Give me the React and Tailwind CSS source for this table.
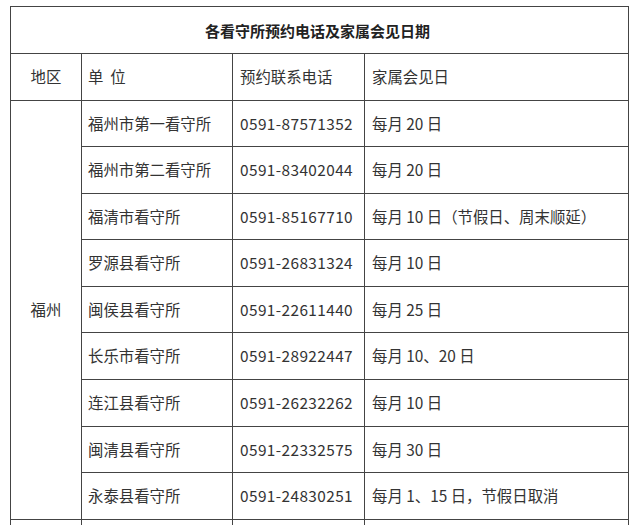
import React from "react";

const rows = [
  ["福州市第一看守所", "0591-87571352", "每月 20 日"],
  ["福州市第二看守所", "0591-83402044", "每月 20 日"],
  ["福清市看守所", "0591-85167710", "每月 10 日（节假日、周末顺延）"],
  ["罗源县看守所", "0591-26831324", "每月 10 日"],
  ["闽侯县看守所", "0591-22611440", "每月 25 日"],
  ["长乐市看守所", "0591-28922447", "每月 10、20 日"],
  ["连江县看守所", "0591-26232262", "每月 10 日"],
  ["闽清县看守所", "0591-22332575", "每月 30 日"],
  ["永泰县看守所", "0591-24830251", "每月 1、15 日，节假日取消"],
];

const cell = "border-r border-b border-[#444] flex items-center";

export default function App() {
  return (
    <div className="w-[640px] h-[525px] bg-white overflow-hidden pt-[6px] pl-[10px]" style={{ fontFamily: '"Noto Sans CJK SC", "Noto Sans", sans-serif' }}>
      <div className="grid w-[619px] border-l border-t border-[#444] grid-cols-[71px_151px_132px_264px] grid-rows-[47px_47px_46px_47px_46px_47px_46px_47px_47px_46px_47px_47px] text-[15.4px] text-[#333]">
        <div className={`${cell} col-span-4 justify-center pt-[3px] pr-[4px] font-bold text-[15px] text-[#222]`}>各看守所预约电话及家属会见日期</div>
        <div className={`${cell} justify-center`}>地区</div>
        <div className={`${cell} pl-[6px]`}>单&nbsp;&nbsp;位</div>
        <div className={`${cell} pl-[7px]`}>预约联系电话</div>
        <div className={`${cell} pl-[7px]`}>家属会见日</div>
        <div className={`${cell} row-span-9 justify-center`}>福州</div>
        {rows.map((r, i) => (
          <React.Fragment key={i}>
            <div className={`${cell} pl-[6px]`}>{r[0]}</div>
            <div className={`${cell} pl-[7px] tracking-[0.4px]`}>{r[1]}</div>
            <div className={`${cell} pl-[7px]`}>{r[2]}</div>
          </React.Fragment>
        ))}
        <div className={cell}></div>
        <div className={cell}></div>
        <div className={cell}></div>
        <div className={cell}></div>
      </div>
    </div>
  );
}
